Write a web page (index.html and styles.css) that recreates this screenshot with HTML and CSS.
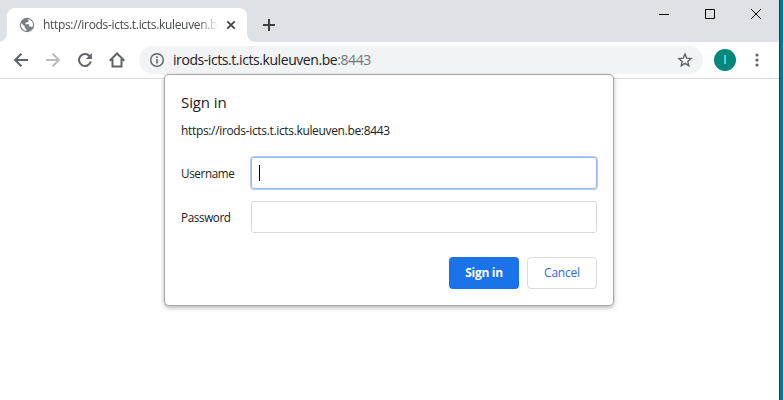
FILE: index.html
```html
<!DOCTYPE html>
<html lang="en">
<head>
<meta charset="utf-8">
<title>Sign in</title>
<link rel="stylesheet" href="styles.css">
</head>
<body>
<div class="window">
  <header class="tabstrip">
    <div class="tab">
      <svg class="globe" width="16" height="16" viewBox="0 0 16 16"><circle cx="8" cy="8" r="7.2" fill="#7b7f83"/><path d="M2.2 6 5.8 9.4V10.8L7.4 12.2V14A6.2 6.2 0 0 1 2.2 6ZM8.2 2 9.6 3V4.4L8 5.6H6.4V7.2H10.2V9.4H12L12.8 10.6 14 8.8A6 6 0 0 0 8.2 2Z" fill="#fff"/></svg>
      <span class="tab-title">https://irods-icts.t.icts.kuleuven.be:8443</span>
      <svg class="tab-close" width="10" height="10" viewBox="0 0 10 10"><path d="M1.3 1.3 8.7 8.7M8.7 1.3 1.3 8.7" stroke="#3c4043" stroke-width="1.7"/></svg>
    </div>
    <svg class="new-tab" width="12" height="12" viewBox="0 0 12 12"><path d="M6 0V12M0 6H12" stroke="#3c4043" stroke-width="2"/></svg>
    <div class="controls">
      <svg width="10" height="10" viewBox="0 0 10 10"><path d="M0 5.5H10" stroke="#000"/></svg>
      <svg width="10" height="10" viewBox="0 0 10 10"><path d="M.5 .5H9.5V9.5H.5Z" fill="none" stroke="#000"/></svg>
      <svg width="10" height="10" viewBox="0 0 10 10"><path d="M0 0 10 10M10 0 0 10" stroke="#000"/></svg>
    </div>
  </header>
  <nav class="toolbar">
    <div class="nav-icons">
      <svg width="16" height="16" viewBox="0 0 16 16"><path d="M15 8H2.5M8.4 1.7 2.1 8 8.4 14.3" fill="none" stroke="#5f6368" stroke-width="2"/></svg>
      <svg width="16" height="16" viewBox="0 0 16 16"><path d="M1 8H13.5M7.6 1.7 13.9 8 7.6 14.3" fill="none" stroke="#babcbe" stroke-width="2"/></svg>
      <svg width="16" height="16" viewBox="0 0 16 16"><path d="M13.8 9.6A6 6 0 1 1 12.5 4" fill="none" stroke="#5f6368" stroke-width="2"/><path d="M14.9 1V7H8.9Z" fill="#5f6368"/></svg>
      <svg width="16" height="16" viewBox="0 0 16 16"><path d="M.7 8.7 8 1.5 15.3 8.7M3.5 7V14.5H12.5V7" fill="none" stroke="#5f6368" stroke-width="2"/></svg>
    </div>
    <div class="omnibox">
      <svg width="16" height="16" viewBox="0 0 16 16"><circle cx="8" cy="8" r="6.3" fill="none" stroke="#5f6368" stroke-width="1.4"/><path d="M8 7V11.6M8 4.3V5.9" stroke="#5f6368" stroke-width="1.6"/></svg>
      <span class="url">irods-icts.t.icts.kuleuven.be<span class="port">:8443</span></span>
      <svg class="star" width="16" height="16" viewBox="0 0 16 16"><path d="M8 2 9.7 6.1 14.1 6.5 10.8 9.4 11.8 13.7 8 11.4 4.2 13.7 5.2 9.4 1.9 6.5 6.3 6.1Z" fill="none" stroke="#5f6368" stroke-width="1.4"/></svg>
    </div>
    <div class="avatar">I</div>
    <svg class="kebab" width="4" height="14" viewBox="0 0 4 14" fill="#5f6368"><circle cx="2" cy="2" r="1.6"/><circle cx="2" cy="7" r="1.6"/><circle cx="2" cy="12" r="1.6"/></svg>
  </nav>
  <form class="dialog">
    <h1>Sign in</h1>
    <p class="origin">https://irods-icts.t.icts.kuleuven.be:8443</p>
    <div class="row"><span class="label">Username</span><div class="field focused"><i class="caret"></i></div></div>
    <div class="row"><span class="label">Password</span><div class="field"></div></div>
    <div class="actions">
      <button type="button" class="primary">Sign in</button>
      <button type="button" class="secondary">Cancel</button>
    </div>
  </form>
</div>
</body>
</html>
```
FILE: styles.css
```css
* { box-sizing: border-box; }
body {
  margin: 0;
  height: 400px;
  overflow: hidden;
  background: #0d7390;
  font: 12px/16px "Open Sans", "Noto Sans", sans-serif;
  color: #202124;
}
svg { display: block; flex: none; }
.window {
  position: relative;
  width: 780px;
  height: 400px;
  background: #fff;
  border-right: 1px solid #164453;
}
.tabstrip {
  height: 42px;
  background: #dee1e6;
  display: flex;
  padding: 8px 18px 0 7px;
}
.tab {
  position: relative;
  width: 240px;
  height: 34px;
  background: #fff;
  border-radius: 8px 8px 0 0;
  display: flex;
  align-items: center;
  padding: 0 11px 0 12px;
}
.tab::before, .tab::after {
  content: "";
  position: absolute;
  bottom: 0;
  width: 8px;
  height: 8px;
}
.tab::before { left: -8px; background: radial-gradient(circle at 0 0, transparent 7.5px, #fff 8px); }
.tab::after { right: -8px; background: radial-gradient(circle at 100% 0, transparent 7.5px, #fff 8px); }
.tab-title {
  width: 175px;
  margin-left: 8px;
  overflow: hidden;
  white-space: nowrap;
  color: #45494d;
  letter-spacing: -0.32px;
  -webkit-mask-image: linear-gradient(to right, #000 155px, transparent 175px);
  mask-image: linear-gradient(to right, #000 155px, transparent 175px);
}
.tab-close { margin-left: auto; }
.new-tab { margin: 11px 0 0 16px; }
.controls { display: flex; gap: 36px; margin: 1px 0 0 auto; }
.toolbar {
  height: 37px;
  border-bottom: 1px solid #d9dadc;
  display: flex;
  align-items: center;
  padding: 0 20px 0 13px;
}
.nav-icons { display: flex; gap: 16px; }
.omnibox {
  width: 564px;
  height: 28px;
  margin-left: 14px;
  padding: 0 10px;
  border-radius: 14px;
  background: #f1f3f4;
  display: flex;
  align-items: center;
}
.url { margin-left: 8px; font-size: 14px; line-height: 20px; letter-spacing: -0.43px; }
.port { color: #70757a; }
.star { margin-left: auto; }
.avatar {
  width: 22px;
  height: 22px;
  margin-left: 11px;
  border-radius: 50%;
  background: #00897b;
  color: #d9eeeb;
  font-size: 12px;
  line-height: 22px;
  text-align: center;
}
.kebab { margin-left: auto; }
.dialog {
  position: absolute;
  left: 165px;
  top: 75px;
  width: 448px;
  height: 230px;
  padding: 15px 16px 16px;
  background: #fff;
  border-radius: 4px;
  box-shadow: 0 0 0 1px #a5a6a8, 0 2px 4px 1px rgba(0,0,0,.28);
}
h1 { margin: 0; font-size: 15px; line-height: 24px; font-weight: 400; letter-spacing: -0.1px; }
.origin { margin: 9px 0 18px; letter-spacing: -0.34px; }
.row { display: flex; align-items: center; height: 32px; margin-bottom: 12px; }
.label { width: 70px; flex: none; font-size: 11.7px; letter-spacing: -0.38px; }
.field { flex: 1; height: 32px; border: 1px solid #d9dadd; border-radius: 3px; display: flex; align-items: center; padding-left: 7px; }
.focused { border-color: #95b9ed; box-shadow: 0 0 0 1px #b3cef5; }
.caret { width: 1px; height: 16px; background: #000; }
.actions { display: flex; justify-content: flex-end; gap: 8px; margin-top: 24px; }
button { width: 70px; height: 32px; padding: 0; border-radius: 4px; font: 600 12px/16px "Open Sans", sans-serif; letter-spacing: -0.2px; }
.primary { border: 0; background: #1a73e8; color: #fff; font-weight: 700; letter-spacing: -0.3px; }
.secondary { background: #fff; border: 1px solid #dadce0; color: #2a6de0; font-weight: 500; }
```
